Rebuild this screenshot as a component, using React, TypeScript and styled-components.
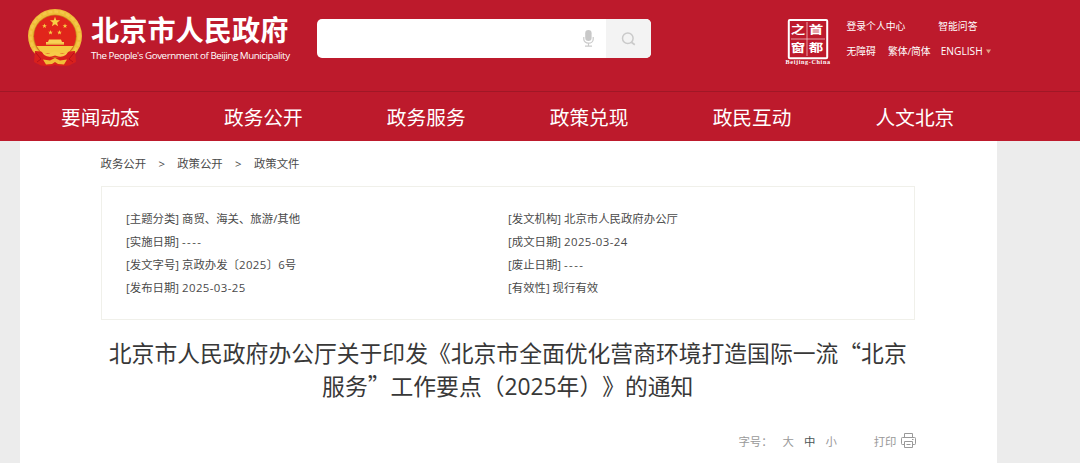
import React from "react";
import styled, { createGlobalStyle } from "styled-components";

const GlobalStyle = createGlobalStyle`
  * { box-sizing: border-box; }
  body {
    margin: 0;
    background: #ececec;
    font-family: "Open Sans", "Noto Sans CJK SC", sans-serif;
    color: #4a4a4a;
    overflow: hidden;
    font-kerning: none;
    text-spacing-trim: space-all;
  }
`;

const Page = styled.div`
  height: 463px;
  display: flex;
  flex-direction: column;
  overflow: hidden;
`;

const Header = styled.header`
  height: 91px;
  flex: none;
  background: #bd1a2c;
  display: flex;
  align-items: flex-start;
  color: #fff;
`;

const EmblemSvg = styled.svg`
  flex: none;
  margin: 8px 0 0 27px;
`;

const Brand = styled.div`
  width: 226px;
  margin: 11px 0 0 8px;
  flex: none;
  white-space: nowrap;
`;

const BrandName = styled.div`
  font: 700 28.2px/36px "Noto Sans CJK SC", sans-serif;
`;

const BrandSub = styled.div`
  margin-top: 1px;
  font-size: 9.8px;
  line-height: 16px;
  letter-spacing: -0.46px;
`;

const Search = styled.div`
  width: 334px;
  height: 39px;
  margin-top: 19px;
  flex: none;
  display: flex;
  border-radius: 5px;
  overflow: hidden;
  background: #fff;
`;

const SearchField = styled.div`
  flex: 1;
  display: flex;
  align-items: center;
  justify-content: flex-end;
  padding-right: 12px;
`;

const SearchButton = styled.div`
  width: 45px;
  display: flex;
  align-items: center;
  justify-content: center;
  background: #f3f3f3;
`;

const SealSvg = styled.svg`
  flex: none;
  margin: 18px 0 0 133px;
`;

const Links = styled.div`
  margin: 16px 0 0 14.5px;
  display: flex;
  flex-direction: column;
  gap: 5px;
`;

const LinkRow = styled.div<{ $gap: number }>`
  display: flex;
  gap: ${(p) => p.$gap}px;
  align-items: center;
  height: 20px;
  font-size: 9.8px;
  white-space: nowrap;
`;

const English = styled.span`
  display: flex;
  align-items: center;
  gap: 3px;
  font-size: 10.2px;
  margin-left: -2px;
`;

const Nav = styled.nav`
  height: 50px;
  flex: none;
  background: #bd1a2c;
  border-top: 1px solid #a01726;
  padding-left: 19px;
  display: flex;
  color: #fff;
`;

const NavItem = styled.a`
  width: 162.9px;
  text-align: center;
  font: 400 19.7px/50px "Noto Sans CJK SC", sans-serif;
`;

const Sheet = styled.main`
  width: 977px;
  flex: 1;
  margin-left: 20px;
  padding: 0 82px 0 80.5px;
  background: #fff;
`;

const Crumbs = styled.div`
  display: flex;
  gap: 12.3px;
  height: 45.4px;
  line-height: 46px;
  font-size: 11.4px;
  white-space: nowrap;
`;

const InfoBox = styled.section`
  height: 134px;
  border: 1px solid #f0f0ea;
  padding: 20.8px 0 0 24.5px;
  display: grid;
  grid-template-columns: 382px 1fr;
  grid-auto-rows: 22.8px;
  font-size: 11.4px;
  line-height: 22.8px;
  white-space: nowrap;
`;

const Digits = styled.span`
  letter-spacing: 0.43px;
`;

const Dashes = styled.span`
  letter-spacing: 1.4px;
`;

const Title = styled.h1`
  margin: 16.6px 0 0;
  text-align: center;
  font: 400 22.8px/32.6px "Noto Sans CJK SC", sans-serif;
  font-kerning: none;
  color: #383838;
  white-space: nowrap;
`;

const TitleDigits = styled.span`
  font-family: "Open Sans", sans-serif;
`;

const Tools = styled.div`
  display: flex;
  justify-content: flex-end;
  align-items: center;
  margin-top: 26.8px;
  height: 22px;
  font-size: 11.4px;
  color: #999;
  white-space: nowrap;
`;

const SizeLabel = styled.span`
  width: 44px;
`;

const SizeOption = styled.span<{ $active?: boolean }>`
  width: 21.6px;
  color: ${(p) => (p.$active ? "#4b5556" : "#999")};
`;

const Print = styled.span`
  display: flex;
  align-items: center;
  gap: 4px;
  margin: 0 -0.5px 0 26.5px;
`;

const star = (cx: number, cy: number, r: number) =>
  Array.from({ length: 10 }, (_, i) => {
    const a = (Math.PI / 5) * i - Math.PI / 2;
    const d = i % 2 ? r * 0.42 : r;
    return `${cx + d * Math.cos(a)},${cy + d * Math.sin(a)}`;
  }).join(" ");

const Emblem = () => (
  <EmblemSvg width="56" height="60" viewBox="0 0 56 60">
    <path d="M8 42 L8 54 L14 57 L22 58 L28 57 L34 58 L42 57 L48 54 L48 42 Z" fill="#d8201d" />
    <circle cx="28" cy="28" r="27" fill="#f0bd38" />
    <circle cx="28" cy="28" r="24.5" fill="none" stroke="#f4c84a" strokeWidth="2.5" strokeDasharray="4 2" />
    <circle cx="28" cy="28.3" r="21.8" fill="#c88a20" />
    <circle cx="28" cy="28.3" r="21" fill="#e1251b" />
    <polygon points={star(28, 14, 5.3)} fill="#f7cf45" />
    <polygon points={star(17.5, 18, 2.5)} fill="#f7cf45" />
    <polygon points={star(38, 18, 2.5)} fill="#f7cf45" />
    <polygon points={star(23.5, 24.5, 2.5)} fill="#f7cf45" />
    <polygon points={star(32.5, 24.5, 2.5)} fill="#f7cf45" />
    <path d="M22 31.5h12l1 2.5h2v3H19v-3h2z" fill="#f8d154" />
    <path d="M9.5 38h37l-5 7H14.5z" fill="#f5c842" />
    <path d="M19 36.3h18" stroke="#d8731e" strokeWidth=".8" />
    <path d="M8 43 L14 43.5 L20 47 L24 49 L28 50 L32 49 L36 47 L42 43.5 L48 43 L49 54 L42 57.5 L34 58 L28 57 L22 58 L14 57.5 L7 54 Z" fill="#d8201d" />
    <path d="M15 43.5 Q20 47 24.5 44.5 Q28 42.5 31.5 44.5 Q36 47 41 43.5 Q39 49.5 31.5 48.5 L28 47.5 L24.5 48.5 Q17 49.5 15 43.5Z" fill="#f7ca48" />
    <path d="M16 51.5l7 1 5-2.5 5 2.5 7-1-3 5-6-.5-3-2-3 2-6 .5z" fill="#f1bd37" />
    <path d="M9 45l5 6-4 3M47 45l-5 6 4 3" stroke="#b91019" fill="none" />
  </EmblemSvg>
);

const Mic = () => (
  <svg width="11" height="17" viewBox="0 0 11 17">
    <rect x="2.2" y="0" width="6.4" height="11" rx="3.2" fill="#c8c8c8" />
    <path d="M.8 7v2.2a4.7 4 0 0 0 9.4 0V7M5.5 13.2v3M2 16.2h7" fill="none" stroke="#cacaca" strokeWidth="1.2" />
  </svg>
);

const Magnifier = () => (
  <svg width="15" height="14" viewBox="0 0 15 14">
    <circle cx="6.8" cy="6.2" r="5.3" fill="none" stroke="#cacaca" strokeWidth="1.5" />
    <path d="M10.4 10.2l3.4 2.6" stroke="#cacaca" strokeWidth="1.7" />
  </svg>
);

const sealGlyphs: [string, number, number][] = [
  ["之", 14, 16.4],
  ["首", 32, 16.4],
  ["窗", 14, 34.4],
  ["都", 32, 34.4],
];

const Seal = () => (
  <SealSvg width="48" height="48" viewBox="0 0 48 48" fill="#fff">
    <rect x="4.8" y="2" width="38.4" height="38.2" rx="1" fill="none" stroke="#fff" strokeWidth="2" />
    <path d="M7 21h34M23 4v34" stroke="#f0bfc4" strokeWidth=".8" />
    {sealGlyphs.map(([c, x, y]) => (
      <text
        key={c}
        transform={`translate(${x} ${y}) scale(1.32 1)`}
        textAnchor="middle"
        fontFamily="Noto Sans CJK SC"
        fontWeight="700"
        fontSize="11"
      >
        {c}
      </text>
    ))}
    <text x="1.6" y="46.4" fontFamily="Liberation Serif" fontWeight="700" fontSize="6.2" textLength="44.5">
      Beijing-China
    </text>
  </SealSvg>
);

const Printer = () => (
  <svg width="15" height="15" viewBox="0 0 15 15" fill="none" stroke="#999" strokeWidth="1">
    <path d="M3.5 4.5v-4h8v4M3.5 11.5h-2.2a.8.8 0 0 1-.8-.8V5.3a.8.8 0 0 1 .8-.8h12.4a.8.8 0 0 1 .8.8v5.4a.8.8 0 0 1-.8.8h-2.2" />
    <path d="M3.5 8.5h8v6h-8zM5.5 11.5h4M11 6.5h1.5" />
  </svg>
);

const navItems = ["要闻动态", "政务公开", "政务服务", "政策兑现", "政民互动", "人文北京"];

const info: [string, React.ReactNode][] = [
  ["主题分类", "商贸、海关、旅游/其他"],
  ["发文机构", "北京市人民政府办公厅"],
  ["实施日期", <Dashes>----</Dashes>],
  ["成文日期", <Digits>2025-03-24</Digits>],
  ["发文字号", <>京政办发〔<Digits>2025</Digits>〕6号</>],
  ["废止日期", <Dashes>----</Dashes>],
  ["发布日期", <Digits>2025-03-25</Digits>],
  ["有效性", "现行有效"],
];

export default function App() {
  return (
    <Page lang="zh-CN">
      <GlobalStyle />
      <Header>
        <Emblem />
        <Brand>
          <BrandName>北京市人民政府</BrandName>
          <BrandSub>The People's Government of Beijing Municipality</BrandSub>
        </Brand>
        <Search>
          <SearchField>
            <Mic />
          </SearchField>
          <SearchButton>
            <Magnifier />
          </SearchButton>
        </Search>
        <Seal />
        <Links>
          <LinkRow $gap={33}>
            <span>登录个人中心</span>
            <span>智能问答</span>
          </LinkRow>
          <LinkRow $gap={12}>
            <span>无障碍</span>
            <span>繁体/简体</span>
            <English>
              ENGLISH
              <svg width="5" height="5" viewBox="0 0 5 5">
                <path d="M0 .5h5L2.5 4.5z" fill="#e0a080" />
              </svg>
            </English>
          </LinkRow>
        </Links>
      </Header>
      <Nav>
        {navItems.map((item) => (
          <NavItem key={item}>{item}</NavItem>
        ))}
      </Nav>
      <Sheet>
        <Crumbs>
          <span>政务公开</span>
          <span>&gt;</span>
          <span>政策公开</span>
          <span>&gt;</span>
          <span>政策文件</span>
        </Crumbs>
        <InfoBox>
          {info.map(([label, value]) => (
            <div key={label}>
              [{label}] {value}
            </div>
          ))}
        </InfoBox>
        <Title>
          北京市人民政府办公厅关于印发《北京市全面优化营商环境打造国际一流“北京
          <br />
          服务”工作要点（<TitleDigits>2025</TitleDigits>年）》的通知
        </Title>
        <Tools>
          <SizeLabel>字号：</SizeLabel>
          <SizeOption>大</SizeOption>
          <SizeOption $active>中</SizeOption>
          <SizeOption>小</SizeOption>
          <Print>
            打印
            <Printer />
          </Print>
        </Tools>
      </Sheet>
    </Page>
  );
}
